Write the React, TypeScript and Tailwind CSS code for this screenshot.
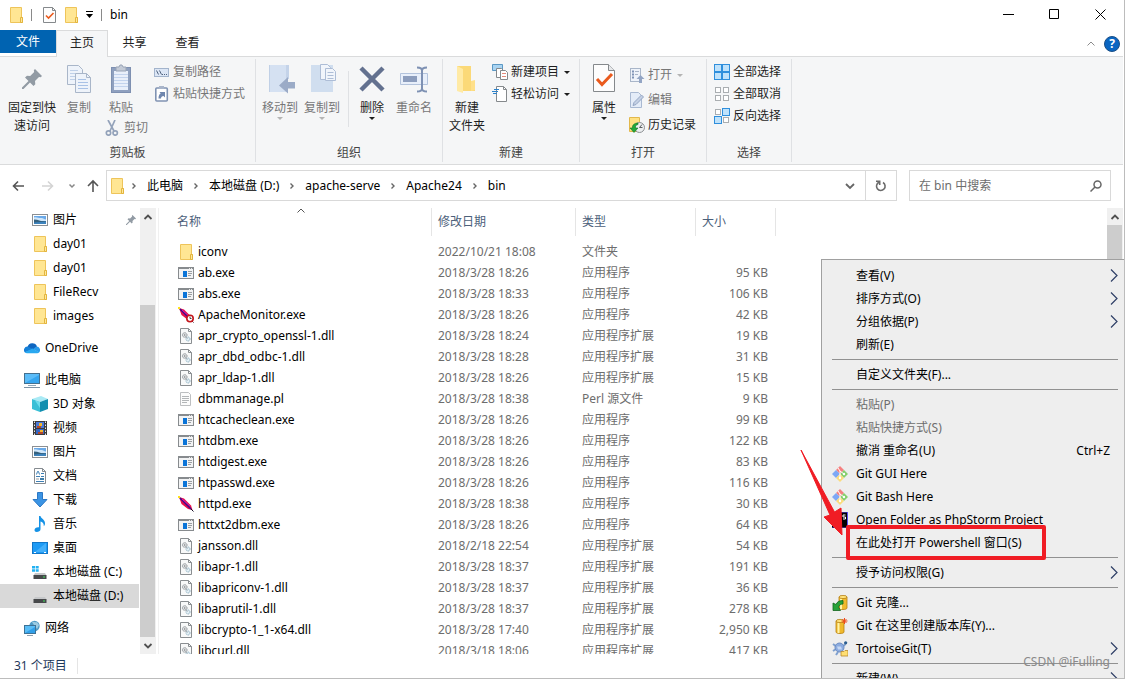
import type { ReactNode } from "react";
import clsx from "clsx";

type IconProps = { className?: string };

/* ---------- shared icons ---------- */

const FolderIcon = ({ className = "size-4" }: IconProps) => (
  <svg viewBox="0 0 16 16" className={className}>
    <path d="M2.500.5h11v10h1v5h-12z" fill="#ffe693" stroke="#eec45a" />
    <path d="M12.500 15.500v-5h2v5z" fill="#ffe89c" stroke="#e3b53e" />
  </svg>
);

const PinIcon = ({ className = "size-5" }: IconProps) => (
  <svg viewBox="0 0 20 20" className={className}>
    <path d="M13 0l7 7-1.300 1.300-1.700-.3-4 4 .3 3.200L11.500 17 8 13.500 1.500 20H0v-1.500L6.500 12 3 8.500 5 6.700l3.200.3 4-4-.4-1.700z" fill="#929ba4" />
  </svg>
);

const PictureIcon = () => (
  <svg viewBox="0 0 16 16" className="size-4">
    <rect x=".5" y="2.500" width="15" height="11" fill="#fff" stroke="#8b8f93" />
    <path d="M2 4h12v4H2z" fill="#6aa9e8" />
    <path d="M2 5.500c3-1 5 1 7 .5s3 1.500 5 1.500V12H2z" fill="#cfe6fa" />
    <path d="M2 7.500l3 .3 4 1.200h5V12H2z" fill="#35617e" />
    <path d="M2 10.500l12-1V12H2z" fill="#3d83bd" />
  </svg>
);

const OneDriveIcon = () => (
  <svg viewBox="0 0 16 16" className="size-4">
    <path d="M3.500 7A5 5 0 0113 6.500l-4 4z" fill="#0f66c0" />
    <path d="M3.500 6.500a3.500 3.500 0 00-2.500 6l8-3.500z" fill="#1680d8" />
    <path d="M12.500 6.500a3.500 3.500 0 012.500 6l-6-3.500z" fill="#2a9bea" />
    <path d="M.8 12.200L8.500 8.500l6.700 3.800a3 3 0 01-2 1H3a3 3 0 01-2.200-1.100z" fill="#29a8f0" />
  </svg>
);

const ComputerIcon = () => (
  <svg viewBox="0 0 16 16" className="size-4">
    <rect x=".5" y="1.500" width="15" height="10" fill="#5bbcf8" stroke="#44708f" />
    <path d="M1 11L15 3v8z" fill="#36a6f0" />
    <path d="M4 13.500h8" stroke="#8fa7b8" />
    <path d="M0 15.500h16" stroke="#7d93a5" />
  </svg>
);

const CubeIcon = () => (
  <svg viewBox="0 0 16 16" className="size-4">
    <path d="M0 3l9-3 7 3-8 3z" fill="#a9eaf5" />
    <path d="M0 3l8 3v10l-8-3z" fill="#39bfd6" />
    <path d="M8 6l8-3v10l-8 3z" fill="#128fb0" />
    <path d="M3 4.500L8 6v6z" fill="#6cdcec" />
  </svg>
);

const VideoIcon = () => (
  <svg viewBox="0 0 16 16" className="size-4">
    <rect x="1" y="1" width="14" height="14" fill="#3b3b3b" />
    <path d="M2.500 1.500v14M13.500 1.500v14" stroke="#e8e8e8" strokeDasharray="1.500 1.500" />
    <path d="M4 2h8v6H4z" fill="#4a78d8" />
    <path d="M4 9h8v5H4z" fill="#3466c4" />
    <path d="M7 3h3v3H7zM8 10h3v2H8z" fill="#f0b52d" />
    <path d="M5 6h4v2H5zM6 12h5v2H6z" fill="#b6472b" />
  </svg>
);

const DocumentIcon = () => (
  <svg viewBox="0 0 16 16" className="size-4">
    <path d="M2.500.5h8l3 3v12h-11z" fill="#fff" stroke="#858b90" />
    <path d="M10.500.5v3h3" fill="none" stroke="#858b90" />
    <path d="M4.500 6.500l1-3h1l1 3M9 5.500h3M4 8.500h4M9 8.500h3M4 13.500h8" stroke="#3c7fb5" fill="none" />
    <path d="M4 11h3" stroke="#9aa0a5" />
    <path d="M8 10h4v2H8z" fill="#3f7da8" />
  </svg>
);

const DownloadIcon = () => (
  <svg viewBox="0 0 16 16" className="size-4">
    <path d="M5.500.5h5v7h4.500L8 15 1 7.500h4.500z" fill="#3b94e4" stroke="#2b78c5" />
  </svg>
);

const MusicIcon = () => (
  <svg viewBox="0 0 16 16" className="size-4">
    <path d="M7 0h1.500c.3 2.500 5 3.500 4.500 8-.1 1-.6 1.800-1.200 2.300.3-2.800-1.300-4.300-3.300-4.800v7.700C8.500 15 6.500 16 4.700 16 3.200 16 2.500 15.200 2.500 14c0-1.500 2-3 4.500-2.700z" fill="#1592e6" />
  </svg>
);

const DesktopIcon = () => (
  <svg viewBox="0 0 16 16" className="size-4">
    <rect x=".5" y="2.500" width="15" height="11" fill="#1e9bf5" stroke="#1176c8" />
    <path d="M3 12L14 3v9z" fill="#43affa" />
    <path d="M2 12.500h2M12 12.500h2" stroke="#fff" />
  </svg>
);

const DriveIcon = ({ system = false }: { system?: boolean }) => (
  <svg viewBox="0 0 16 16" className="size-4">
    {system && <path d="M0 2h3v2.500H0zM3.700 2h3v2.500h-3zM0 5.200h3v2.500H0zM3.700 5.200h3v2.500h-3z" fill="#22b1f2" />}
    <path d="M3 9h10l1.500 2.500h-13z" fill="#c6c8ca" />
    <rect x="1.500" y="11" width="13" height="4" fill="#47494b" />
    <rect x="11" y="12.500" width="2" height="1" fill="#41e05b" />
  </svg>
);

const NetworkIcon = () => (
  <svg viewBox="0 0 16 16" className="size-4">
    <circle cx="10.500" cy="6" r="5.200" fill="#4d9ac6" />
    <path d="M8 2c2-1 3 1 5 0l2 3-2 4-3-4z" fill="#9ccbe2" />
    <rect x=".5" y="5.500" width="11" height="8" fill="#59bdf6" stroke="#3d7296" />
    <path d="M1 13L11 7v6z" fill="#319fe8" />
    <path d="M3 15.500h6" stroke="#8fa0ae" />
  </svg>
);

const ExeIcon = () => (
  <svg viewBox="0 0 16 16" className="size-4">
    <rect x=".5" y="2.500" width="15" height="11" fill="#f2f3f4" stroke="#878b8e" />
    <path d="M0 3h16" stroke="#878b8e" strokeWidth="2" />
    <path d="M11 3.500h1M13 3.500h1" stroke="#e8e8e8" />
    <path d="M5 6h4v6H5z" fill="#0a74d8" />
    <path d="M10 6.500h4M10 8.500h4M10 10.500h3" stroke="#9a9ea1" />
  </svg>
);

const DllIcon = () => (
  <svg viewBox="0 0 16 16" className="size-4">
    <path d="M2.500.5h8l3 3v12h-11z" fill="#f8f9f9" stroke="#8a8e91" />
    <path d="M10.500.5v3h3" fill="none" stroke="#8a8e91" />
    <circle cx="6.700" cy="7" r="2.300" fill="#dfe2e4" stroke="#8f9498" strokeDasharray="1.200 .5" />
    <circle cx="6.700" cy="7" r=".7" fill="#777" />
    <circle cx="10" cy="11" r="2" fill="#e4f0f6" stroke="#8fb0c2" strokeDasharray="1.200 .5" />
    <path d="M7.500 8l2 2.500" stroke="#9fa8ae" />
  </svg>
);

const TextFileIcon = () => (
  <svg viewBox="0 0 16 16" className="size-4">
    <path d="M2.500 1.500h8l2 2v11h-10z" fill="#fcfcfc" stroke="#bdbfc1" />
    <path d="M4 5.500h7M4 7.500h7M4 9.500h7M4 11.500h5" stroke="#b3b6b8" />
  </svg>
);

const FeatherIcon = ({ monitor = false }: { monitor?: boolean }) => (
  <svg viewBox="0 0 16 16" className="size-4">
    <path d="M1 1l5 1.500 7 7 1.500 4.500L10 13 3.500 8z" fill="#e8114a" />
    <path d="M2 2l11 11" stroke="#3d0b8f" strokeWidth="1.600" />
    <path d="M4 3l8 7" stroke="#d11bb2" />
    <path d="M0 0h2v2H0z" fill="#ffe21a" />
    <path d="M13 13l2.500 2.500" stroke="#160e26" />
    {monitor && (
      <>
        <circle cx="12" cy="11.500" r="3.200" fill="#fff" stroke="#c4161c" strokeWidth="1.600" />
        <path d="M12 9.500v2h1.500" fill="none" stroke="#444" />
      </>
    )}
  </svg>
);

const Chevron = ({ className }: IconProps) => (
  <svg viewBox="0 0 10 10" className={clsx("size-2.5 shrink-0", className)} fill="none" stroke="currentColor">
    <path d="M1.500 3.500L5 7l3.500-3.500" />
  </svg>
);

const CrumbArrow = () => (
  <svg viewBox="0 0 10 10" className="mx-1 size-2.5 shrink-0" fill="none" stroke="#666" strokeWidth="1.400">
    <path d="M3.500 2.500L6 5 3.500 7.500" />
  </svg>
);

const Caret = ({ className }: IconProps) => (
  <svg viewBox="0 0 6 3" className={clsx("h-[3px] w-1.5 shrink-0", className)} fill="currentColor">
    <path d="M0 0h6L3 3z" />
  </svg>
);

/* ---------- ribbon icons ---------- */

const PropertiesIcon = ({ className = "size-8" }: IconProps) => (
  <svg viewBox="0 0 32 32" className={className}>
    <path d="M5.500 1.500h15l6 6v21h-21z" fill="#fdfdfd" stroke="#85898c" />
    <path d="M20.500 1.500v6h6" fill="#e6e8ea" stroke="#85898c" />
    <path d="M9 16l5 5.500 10-10.500" fill="none" stroke="#ea5a1d" strokeWidth="3" />
  </svg>
);

const CopyIcon = () => (
  <svg viewBox="0 0 32 32" className="size-8">
    <g fill="#eef3fa" stroke="#a9b6c9">
      <path d="M4.500 2.500h11l4 4v15h-15z" />
      <path d="M7 7.500h8M7 10.500h10M7 13.500h10M7 16.500h10" stroke="#bfd0e8" />
      <path d="M12.500 10.500h11l4 4v15h-15z" />
      <path d="M23.500 10.500v4h4" fill="none" />
      <path d="M15 16.500h8M15 19.500h10M15 22.500h10M15 25.500h10" stroke="#a9c2e6" />
    </g>
  </svg>
);

const PasteIcon = () => (
  <svg viewBox="0 0 32 32" className="size-8">
    <rect x="6.500" y="4.500" width="19" height="25" fill="#8fa0bf" stroke="#7e90b1" />
    <path d="M9 8h14v19H9z" fill="#e9effa" />
    <path d="M9 11.500h14M9 14.500h14M9 17.500h14M9 20.500h14M9 23.500h14" stroke="#c3d3ed" />
    <path d="M11 4h3l1-2h2l1 2h3v4H11z" fill="#c3cad6" stroke="#99a4b6" />
  </svg>
);

const ScissorsIcon = () => (
  <svg viewBox="0 0 16 16" className="size-4" fill="none" stroke="#93a2ba" strokeWidth="1.700">
    <path d="M3 0l6 11M10 0L5 11" />
    <circle cx="3.500" cy="13" r="2.200" />
    <circle cx="10.200" cy="13" r="2.200" />
  </svg>
);

const CopyPathIcon = () => (
  <svg viewBox="0 0 16 16" className="size-4">
    <rect x=".5" y="4.500" width="14" height="8" fill="#dce6f5" stroke="#a3b4cc" />
    <path d="M2.500 6.500l2 4M5.500 6.500l2 4" stroke="#51647f" />
    <path d="M8 10.500h1M10 10.500h1M12 10.500h1" stroke="#51647f" />
  </svg>
);

const PasteShortcutIcon = () => (
  <svg viewBox="0 0 16 16" className="size-4">
    <rect x="1.800" y="2" width="11.500" height="13" rx="1" fill="#fff" stroke="#8093b3" strokeWidth="1.600" />
    <path d="M5 0h5v3H5z" fill="#a9b5ca" />
    <path d="M4.500 12.500c0-3 1-4.500 2.200-5L5.500 6H11v5.500L9.500 10c-1.500.3-2.500 1-2.500 2.500z" fill="#6f86ae" />
  </svg>
);

const MoveToIcon = () => (
  <svg viewBox="0 0 32 32" className="size-8">
    <path d="M5 2h19v27H5z" fill="#d5e1f2" />
    <path d="M22 2h3v14h-3z" fill="#c4d3e9" />
    <path d="M5.500 2v27" stroke="#c0d0e6" />
    <path d="M31 19h-7v-5l-9 8.500 9 8v-5h7z" fill="#9babc7" />
  </svg>
);

const CopyToIcon = () => (
  <svg viewBox="0 0 32 32" className="size-8">
    <path d="M5 2h22v27H5z" fill="#d0deef" />
    <g fill="#f1f5fb" stroke="#adbdd6">
      <path d="M14.500 1.500h7l3 3v12h-10z" />
      <path d="M19.500 5.500h7l3 3v9h-10z" />
      <path d="M21.500 9.500h6M21.500 12.500h6M21.500 15.500h6" />
    </g>
  </svg>
);

const DeleteIcon = () => (
  <svg viewBox="0 0 32 32" className="size-8" stroke="#63718f" strokeWidth="4.500">
    <path d="M5 5l22 22M27 5L5 27" />
  </svg>
);

const RenameIcon = () => (
  <svg viewBox="0 0 32 32" className="size-8" fill="none">
    <path d="M2.500 10.500h27v11h-27z" fill="#e8effa" stroke="#b3c3dc" />
    <path d="M5 13h14v6H5z" fill="#8c9dbd" />
    <path d="M19 4.500c3 0 5 .5 5 3v18c0 2.500-2 3-5 3M29 4.500c-3 0-5 .5-5 3v18c0 2.500 2 3 5 3" stroke="#7e91b3" strokeWidth="2" />
  </svg>
);

const NewFolderIcon = () => (
  <svg viewBox="0 0 32 32" className="size-8">
    <path d="M6 3h14v15l4 1v9H10l-4-1z" fill="#fbd978" />
    <path d="M6 3l6 3v24l-6-2z" fill="#ffeaa5" />
    <path d="M20 18l4-1v10l-4 1z" fill="#ffe08a" />
  </svg>
);

const NewItemIcon = () => (
  <svg viewBox="0 0 16 16" className="size-4">
    <path d="M.5.5h10v6H.5z" fill="#a9d4f2" stroke="#5b98c4" />
    <path d="M4.500 4.500h5l2 2v7h-7z" fill="#fff" stroke="#85898c" />
    <path d="M8.500 6.500h5l2 2v7h-7z" fill="#fff" stroke="#85898c" />
    <path d="M10 9.500h4M10 12.500h4" stroke="#e48a7b" />
  </svg>
);

const EasyAccessIcon = () => (
  <svg viewBox="0 0 16 16" className="size-4">
    <path d="M4.500.5h7l3 3v12h-10z" fill="#fff" stroke="#85898c" />
    <path d="M11.500.5v3h3" fill="none" stroke="#85898c" />
    <path d="M2 3.500h5M0 5.500h6M1 7.500h4" stroke="#2c82cb" />
  </svg>
);

const OpenIcon = () => (
  <svg viewBox="0 0 16 16" className="size-4">
    <rect x="1.500" y="1.500" width="10" height="13" fill="#eef3fa" stroke="#a9b6c9" />
    <path d="M3 4.500h2M3 7.500h2M3 10.500h2" stroke="#7f93b6" strokeWidth="2" />
    <path d="M6 4.500h4M6 7.500h3" stroke="#a9b6c9" />
    <path d="M11.500 8l4 4H13v4h-3v-4H7.500z" fill="#93a5c4" />
  </svg>
);

const EditIcon = () => (
  <svg viewBox="0 0 16 16" className="size-4">
    <path d="M1.500.5h8l3 3v12h-11z" fill="#e4ecf8" stroke="#a9b9d2" />
    <path d="M4 13.500l1-3L12.500 3l2 2L7 12.500z" fill="#c4d0e4" stroke="#94a6c4" />
  </svg>
);

const HistoryIcon = () => (
  <svg viewBox="0 0 16 16" className="size-4">
    <path d="M.5.5h10v14H.5z" fill="#ffe182" stroke="#e2b84c" />
    <circle cx="10.500" cy="10.500" r="5" fill="#eceef0" stroke="#8d9194" />
    <path d="M10.500 10.500l2.500-3M10.500 10.500h3" stroke="#5b5f62" />
    <path d="M9 6C5 6 3 8.500 3.500 11H1l4 4.500L9 11H6.500C6.200 9 7 8 9 7.500z" fill="#22a83a" stroke="#127427" strokeWidth=".6" />
  </svg>
);

const SelectIcon = ({ filled }: { filled: boolean[] }) => (
  <svg viewBox="0 0 16 16" className="size-4">
    {filled.map((on, i) => {
      const x = (i % 2) * 8;
      const y = i > 1 ? 8 : 0;
      return on ? (
        <rect key={i} x={x + 0.5} y={y + 0.5} width="7" height="7" fill="#bfe2fb" stroke="#2f8fdc" />
      ) : (
        <rect key={i} x={x + 1.5} y={y + 1.5} width="5" height="5" fill="#fff" stroke="#aaaeb1" />
      );
    })}
  </svg>
);

/* ---------- context menu icons ---------- */

const GitIcon = () => (
  <svg viewBox="0 0 16 16" className="size-4">
    <path d="M8 0l4 4-4 4-4-4z" fill="#f58080" />
    <path d="M4 4l4 4-4 4-4-4z" fill="#7da7f5" />
    <path d="M12 4l4 4-4 4-4-4z" fill="#85cf6c" />
    <path d="M8 8l4 4-4 4-4-4z" fill="#fbdc7c" />
    <path d="M6 2l2 3v7M8 5l4 3" stroke="#fff" fill="none" />
    <circle cx="8" cy="12" r="1.200" fill="#fff" />
    <circle cx="12" cy="8" r="1.200" fill="#fff" />
  </svg>
);

const PhpStormIcon = () => (
  <svg viewBox="0 0 16 16" className="size-4">
    <rect width="16" height="16" fill="#5a4ff0" />
    <rect width="15" height="15" y=".5" fill="#000" />
    <path d="M6 7V3h2.500v2H6M13.500 3H11v2h2.500v2H11" stroke="#fff" fill="none" />
  </svg>
);

const CloneIcon = () => (
  <svg viewBox="0 0 16 16" className="size-4">
    <path d="M7 2v11c0 2 8 2 8 0V2z" fill="#f0b92c" stroke="#b57e10" strokeWidth=".8" />
    <path d="M9 3v11" stroke="#fff3a6" strokeWidth="2" />
    <ellipse cx="11" cy="2" rx="4" ry="1.600" fill="#ffe27a" stroke="#b57e10" strokeWidth=".8" />
    <path d="M11 5.500C7 5.500 5 7 4 9.500L1 8v7.500h7.500L6.500 12c1-2 2-3 4.500-3z" fill="#27a338" stroke="#12641d" strokeWidth=".8" />
  </svg>
);

const RepoIcon = () => (
  <svg viewBox="0 0 16 16" className="size-4">
    <path d="M4 3v11c0 2 8 2 8 0V3z" fill="#f0b92c" stroke="#b57e10" strokeWidth=".8" />
    <path d="M6.500 4v11" stroke="#fff3a6" strokeWidth="2" />
    <ellipse cx="8" cy="3" rx="4" ry="1.600" fill="#ffe27a" stroke="#b57e10" strokeWidth=".8" />
    <path d="M12.500 0v6M9.500 3h6M10.500 1l4 4M14.500 1l-4 4" stroke="#ee4b1d" />
  </svg>
);

const TortoiseIcon = () => (
  <svg viewBox="0 0 16 16" className="size-4">
    <path d="M1 3l4 3M1 10l3-2M4 14l2-3M14 1l-2 4" stroke="#7fa0cf" strokeWidth="2" />
    <circle cx="7.500" cy="6.500" r="4.500" fill="#8cace0" stroke="#6d8cc0" />
    <path d="M5 5.500h4l1 3H6z" fill="#c6d8f4" />
    <circle cx="13.700" cy="1.800" r="1.600" fill="#2e5f8f" />
    <path d="M9 10.500h3l1-1h3v5.500H9z" fill="#ffdf73" stroke="#b8892c" strokeWidth=".8" />
  </svg>
);

/* ---------- ribbon ---------- */

type BigButtonProps = {
  icon: ReactNode;
  lines: string[];
  disabled?: boolean;
  caret?: boolean;
  className?: string;
};

const BigButton = ({ icon, lines, disabled, caret, className }: BigButtonProps) => (
  <button
    type="button"
    disabled={disabled}
    className={clsx("flex shrink-0 flex-col items-center pt-1", disabled ? "text-[#777]" : "text-[#1e1e1e]", className)}
  >
    <span className="flex size-8 items-center justify-center">{icon}</span>
    <span className="mt-1 leading-[18px]">
      {lines.map((line) => (
        <span key={line} className="block">{line}</span>
      ))}
    </span>
    {caret && <Caret className={disabled ? "text-[#b4b4b4]" : "text-[#1e1e1e]"} />}
  </button>
);

type SmallButtonProps = { icon: ReactNode; label: string; disabled?: boolean; caret?: boolean };

const SmallButton = ({ icon, label, disabled, caret }: SmallButtonProps) => (
  <button
    type="button"
    disabled={disabled}
    className={clsx("flex h-[22px] items-center gap-[3px]", disabled ? "text-[#777]" : "text-[#1e1e1e]")}
  >
    {icon}
    <span>{label}</span>
    {caret && <Caret className={clsx("ml-0.5", disabled && "text-[#b4b4b4]")} />}
  </button>
);

const RibbonGroup = ({ label, className, children }: { label: string; className: string; children: ReactNode }) => (
  <section aria-label={label} className={clsx("flex shrink-0 flex-col border-r border-[#dfe1e4]", className)}>
    <div className="flex flex-1 items-start">{children}</div>
    <div className="pb-px text-center leading-4 text-[#444]">{label}</div>
  </section>
);

const Ribbon = () => (
  <div className="flex h-[109px] shrink-0 border-y border-[#dadbdc] bg-[#f5f6f7] py-0.5">
    <RibbonGroup label="剪贴板" className="w-64">
      <BigButton icon={<PinIcon />} lines={["固定到快", "速访问"]} className="ml-2 w-12" />
      <BigButton icon={<CopyIcon />} lines={["复制"]} disabled className="ml-[7px] w-8" />
      <div className="ml-2.5 w-11">
        <BigButton icon={<PasteIcon />} lines={["粘贴"]} disabled className="w-8" />
        <SmallButton icon={<ScissorsIcon />} label="剪切" disabled />
      </div>
      <div className="ml-[5px] pt-0.5">
        <SmallButton icon={<CopyPathIcon />} label="复制路径" disabled />
        <SmallButton icon={<PasteShortcutIcon />} label="粘贴快捷方式" disabled />
      </div>
    </RibbonGroup>
    <RibbonGroup label="组织" className="w-[187px]">
      <BigButton icon={<MoveToIcon />} lines={["移动到"]} disabled caret className="ml-1.5" />
      <BigButton icon={<CopyToIcon />} lines={["复制到"]} disabled caret className="ml-1.5" />
      <div className="mt-3 ml-2 h-14 w-px bg-[#dfe1e4]" />
      <BigButton icon={<DeleteIcon />} lines={["删除"]} caret className="ml-[7px] w-8" />
      <BigButton icon={<RenameIcon />} lines={["重命名"]} disabled className="ml-2" />
    </RibbonGroup>
    <RibbonGroup label="新建" className="w-[137px]">
      <BigButton icon={<NewFolderIcon />} lines={["新建", "文件夹"]} className="ml-1.5" />
      <div className="ml-[7px] pt-0.5">
        <SmallButton icon={<NewItemIcon />} label="新建项目" caret />
        <SmallButton icon={<EasyAccessIcon />} label="轻松访问" caret />
      </div>
    </RibbonGroup>
    <RibbonGroup label="打开" className="w-[127px]">
      <BigButton icon={<PropertiesIcon />} lines={["属性"]} caret className="ml-2 w-8" />
      <div className="ml-[9px] flex flex-col gap-[3px] pt-[5px]">
        <SmallButton icon={<OpenIcon />} label="打开" disabled caret />
        <SmallButton icon={<EditIcon />} label="编辑" disabled />
        <SmallButton icon={<HistoryIcon />} label="历史记录" />
      </div>
    </RibbonGroup>
    <RibbonGroup label="选择" className="w-[85px]">
      <div className="ml-[7px] pt-0.5">
        <SmallButton icon={<SelectIcon filled={[true, true, true, true]} />} label="全部选择" />
        <SmallButton icon={<SelectIcon filled={[false, false, false, false]} />} label="全部取消" />
        <SmallButton icon={<SelectIcon filled={[false, true, true, false]} />} label="反向选择" />
      </div>
    </RibbonGroup>
  </div>
);

/* ---------- title bar and tabs ---------- */

const TitleBar = () => (
  <header className="flex h-[30px] shrink-0 items-center pb-px">
    <div className="flex flex-1 items-center pl-2">
      <FolderIcon />
      <span className="mx-[7px] h-3 w-px bg-[#8a8a8a]" />
      <button type="button" aria-label="属性" className="ml-0.5">
        <svg viewBox="0 0 16 16" className="size-4">
          <path d="M2.500.5h9l3 3v12h-12z" fill="#fdfdfd" stroke="#85898c" />
          <path d="M11.500.5v3h3" fill="none" stroke="#85898c" />
          <path d="M5 8.500l2.500 2.500 5-5" fill="none" stroke="#ea5a1d" strokeWidth="1.600" />
        </svg>
      </button>
      <button type="button" aria-label="新建文件夹" className="ml-1.5">
        <FolderIcon />
      </button>
      <button type="button" aria-label="自定义快速访问工具栏" className="ml-[7px] flex flex-col items-center gap-0.5">
        <span className="h-px w-[7px] bg-black" />
        <svg viewBox="0 0 7 4" className="h-1 w-[7px]"><path d="M0 0h7L3.500 4z" /></svg>
      </button>
      <span className="mx-2 h-3 w-px bg-[#8a8a8a]" />
      <h1>bin</h1>
    </div>
    <button type="button" aria-label="最小化" className="flex w-[46px] justify-center">
      <svg viewBox="0 0 11 11" className="size-[11px]" stroke="#000"><path d="M0 5.500h11" /></svg>
    </button>
    <button type="button" aria-label="最大化" className="flex w-[46px] justify-center">
      <svg viewBox="0 0 11 11" className="size-[11px]" stroke="#000" fill="none"><path d="M.5.5h9v9h-9z" /></svg>
    </button>
    <button type="button" aria-label="关闭" className="flex w-[46px] justify-center">
      <svg viewBox="0 0 11 11" className="size-[11px]" stroke="#000"><path d="M.5.5l10 10M10.500.5l-10 10" /></svg>
    </button>
  </header>
);

const Tabs = () => (
  <nav className="z-10 -mb-px flex h-[27px] shrink-0 text-[#222]">
    <button type="button" className="mb-1 w-14 bg-[#0063b1] pt-px text-white">文件</button>
    <button type="button" className="w-[52px] border border-b-0 border-[#dadbdc] bg-[#f5f6f7] pb-0.5">主页</button>
    <button type="button" className="w-[53px] pb-0.5">共享</button>
    <button type="button" className="w-[53px] pb-0.5">查看</button>
    <div className="flex flex-1 items-center justify-end gap-2 pr-[3px]">
      <button type="button" aria-label="最小化功能区">
        <Chevron className="rotate-180 text-[#8b8b8b]" />
      </button>
      <button type="button" aria-label="帮助" className="flex size-4 items-center justify-center rounded-full border border-[#1b4f86] bg-[#0a66c2] font-bold text-white">
        ?
      </button>
    </div>
  </nav>
);

/* ---------- address bar ---------- */

const crumbs = ["此电脑", "本地磁盘 (D:)", "apache-serve", "Apache24", "bin"];

const AddressBar = () => (
  <div className="flex h-[43px] shrink-0 items-start pt-[5px] pr-3">
    <div className="flex h-[31px] w-[106px] items-center text-[#555]">
      <button type="button" aria-label="后退" className="ml-3">
        <svg viewBox="0 0 14 14" className="size-3.5" fill="none" stroke="currentColor" strokeWidth="1.600">
          <path d="M12 7H1.500M6 2.500L1.500 7 6 11.500" />
        </svg>
      </button>
      <button type="button" aria-label="前进" className="ml-4 text-[#d4d4d4]">
        <svg viewBox="0 0 14 14" className="size-3.5" fill="none" stroke="currentColor" strokeWidth="1.600">
          <path d="M0 7h10.500M6 2.500l4.500 4.500L6 11.500" />
        </svg>
      </button>
      <button type="button" aria-label="最近浏览的位置" className="ml-[11px]">
        <svg viewBox="0 0 10 10" className="size-2.5" fill="none" stroke="#888" strokeWidth="1.500">
          <path d="M2.500 3.500L5 6l2.500-2.500" />
        </svg>
      </button>
      <button type="button" aria-label="上移" className="ml-[9px]">
        <svg viewBox="0 0 14 14" className="size-3.5" fill="none" stroke="currentColor" strokeWidth="1.600">
          <path d="M7 13V2M2 7l5-5 5 5" />
        </svg>
      </button>
    </div>
    <div className="flex h-[31px] flex-1 items-center border border-[#d9d9d9]">
      <span className="ml-0.5 shrink-0"><FolderIcon /></span>
      {crumbs.map((crumb) => (
        <span key={crumb} className="flex items-center">
          <CrumbArrow />
          <button type="button" className="px-1">{crumb}</button>
        </span>
      ))}
      <button type="button" aria-label="展开地址栏" className="mr-2.5 ml-auto text-[#666]">
        <svg viewBox="0 0 10 10" className="size-2.5" fill="none" stroke="currentColor" strokeWidth="1.800">
          <path d="M1 3l4 4 4-4" />
        </svg>
      </button>
      <button type="button" aria-label="刷新" className="flex h-full w-[31px] items-center justify-center border-l border-[#d9d9d9]">
        <svg viewBox="0 0 12 12" className="size-3" fill="none" stroke="#6b6b6b" strokeWidth="1.600">
          <path d="M8 2.500A4.300 4.300 0 114 2.300" />
          <path d="M1 1.300h3.700v3.700" />
        </svg>
      </button>
    </div>
    <div className="ml-3 flex h-[31px] w-[202px] items-center border border-[#d9d9d9] pr-2">
      <input aria-label="搜索" placeholder="在 bin 中搜索" className="min-w-0 flex-1 px-[9px] outline-none placeholder:text-[#6d6d6d]" />
      <svg viewBox="0 0 12 12" className="size-3" fill="none" stroke="#666" strokeWidth="1.500">
        <circle cx="7.500" cy="4.500" r="3.500" />
        <path d="M5 7L.5 11.500" />
      </svg>
    </div>
  </div>
);

/* ---------- navigation pane ---------- */

type NavItem = { label: string; icon: ReactNode; root?: boolean; pinned?: boolean; selected?: boolean };

const navGroups: NavItem[][] = [
  [
    { label: "图片", icon: <PictureIcon />, pinned: true },
    { label: "day01", icon: <FolderIcon /> },
    { label: "day01", icon: <FolderIcon /> },
    { label: "FileRecv", icon: <FolderIcon /> },
    { label: "images", icon: <FolderIcon /> },
  ],
  [{ label: "OneDrive", icon: <OneDriveIcon />, root: true }],
  [
    { label: "此电脑", icon: <ComputerIcon />, root: true },
    { label: "3D 对象", icon: <CubeIcon /> },
    { label: "视频", icon: <VideoIcon /> },
    { label: "图片", icon: <PictureIcon /> },
    { label: "文档", icon: <DocumentIcon /> },
    { label: "下载", icon: <DownloadIcon /> },
    { label: "音乐", icon: <MusicIcon /> },
    { label: "桌面", icon: <DesktopIcon /> },
    { label: "本地磁盘 (C:)", icon: <DriveIcon system /> },
    { label: "本地磁盘 (D:)", icon: <DriveIcon />, selected: true },
  ],
  [{ label: "网络", icon: <NetworkIcon />, root: true }],
];

const ScrollArrow = ({ up = false }: { up?: boolean }) => (
  <span className="flex h-[17px] shrink-0 items-center justify-center">
    <svg viewBox="0 0 10 10" className={clsx("size-2.5", up && "rotate-180")} fill="none" stroke="#505050" strokeWidth="1.800">
      <path d="M1.500 3L5 6.500 8.500 3" />
    </svg>
  </span>
);

const Sidebar = () => (
  <aside className="flex w-[159px] shrink-0 border-r border-[#f0f0f0]">
    <nav className="flex w-[139px] flex-col gap-2 overflow-hidden">
      {navGroups.map((group, i) => (
        <div key={i}>
          {group.map((item, j) => (
            <a
              key={j}
              href="#"
              className={clsx(
                "flex h-6 items-center gap-[5px] whitespace-nowrap",
                item.root ? "pl-6" : "pl-8",
                item.selected && "bg-[#d9d9d9]",
              )}
            >
              {item.icon}
              {item.label}
              {item.pinned && <span className="mr-[3px] ml-auto"><PinIcon className="size-2.5" /></span>}
            </a>
          ))}
        </div>
      ))}
    </nav>
    <div className="ml-px flex w-4 flex-col bg-[#f0f0f0]">
      <ScrollArrow up />
      <div className="mt-20 w-[15px] flex-1 bg-[#cdcdcd]" />
      <ScrollArrow />
    </div>
  </aside>
);

/* ---------- file list ---------- */

const exe = <ExeIcon />;
const dll = <DllIcon />;
const APP = "应用程序";
const EXT = "应用程序扩展";

const files: [ReactNode, string, string, string, string][] = [
  [<FolderIcon />, "iconv", "2022/10/21 18:08", "文件夹", ""],
  [exe, "ab.exe", "2018/3/28 18:26", APP, "95 KB"],
  [exe, "abs.exe", "2018/3/28 18:33", APP, "106 KB"],
  [<FeatherIcon monitor />, "ApacheMonitor.exe", "2018/3/28 18:26", APP, "42 KB"],
  [dll, "apr_crypto_openssl-1.dll", "2018/3/28 18:24", EXT, "19 KB"],
  [dll, "apr_dbd_odbc-1.dll", "2018/3/28 18:28", EXT, "31 KB"],
  [dll, "apr_ldap-1.dll", "2018/3/28 18:26", EXT, "15 KB"],
  [<TextFileIcon />, "dbmmanage.pl", "2018/3/28 18:38", "Perl 源文件", "9 KB"],
  [exe, "htcacheclean.exe", "2018/3/28 18:26", APP, "99 KB"],
  [exe, "htdbm.exe", "2018/3/28 18:26", APP, "122 KB"],
  [exe, "htdigest.exe", "2018/3/28 18:26", APP, "83 KB"],
  [exe, "htpasswd.exe", "2018/3/28 18:26", APP, "116 KB"],
  [<FeatherIcon />, "httpd.exe", "2018/3/28 18:38", APP, "30 KB"],
  [exe, "httxt2dbm.exe", "2018/3/28 18:26", APP, "64 KB"],
  [dll, "jansson.dll", "2018/2/18 22:54", EXT, "54 KB"],
  [dll, "libapr-1.dll", "2018/3/28 18:37", EXT, "191 KB"],
  [dll, "libapriconv-1.dll", "2018/3/28 18:37", EXT, "36 KB"],
  [dll, "libaprutil-1.dll", "2018/3/28 18:37", EXT, "278 KB"],
  [dll, "libcrypto-1_1-x64.dll", "2018/3/28 17:40", EXT, "2,950 KB"],
  [dll, "libcurl.dll", "2018/3/18 18:06", EXT, "417 KB"],
];

const FileList = () => (
  <main className="flex min-w-0 flex-1 items-start justify-between overflow-hidden pl-3">
    <table className="w-[605px] table-fixed border-separate border-spacing-0">
      <thead className="text-[#4c607a]">
        <tr className="h-7 text-left *:border-r *:border-[#e5e5e5] *:px-1.5 *:py-0 *:font-normal">
          <th className="relative w-[261px]">
            名称
            <Chevron className="absolute -top-0.5 left-1/2 -translate-x-1/2 rotate-180 text-[#555]" />
          </th>
          <th className="w-36">修改日期</th>
          <th className="w-[120px]">类型</th>
          <th className="w-20">大小</th>
        </tr>
      </thead>
      <tbody className="text-[#6d6d6d] before:block before:h-[5px] before:content-['']">
        {files.map(([icon, name, date, type, size]) => (
          <tr key={name} className="h-[21px] whitespace-nowrap *:py-0">
            <td className="pl-[7px] text-black">
              <span className="flex items-center gap-1">
                {icon}
                {name}
              </span>
            </td>
            <td className="pl-1.5">{date}</td>
            <td className="pl-1.5">{type}</td>
            <td className="pr-2 text-right">{size}</td>
          </tr>
        ))}
      </tbody>
    </table>
    <div className="flex w-4 flex-col self-stretch bg-[#f0f0f0]">
      <ScrollArrow up />
      <div className="mb-24 w-[15px] flex-1 bg-[#cdcdcd]" />
    </div>
  </main>
);

/* ---------- context menu ---------- */

type MenuEntry = {
  label: string;
  icon?: ReactNode;
  submenu?: boolean;
  disabled?: boolean;
  shortcut?: string;
  highlighted?: boolean;
};

const menuSections: MenuEntry[][] = [
  [
    { label: "查看(V)", submenu: true },
    { label: "排序方式(O)", submenu: true },
    { label: "分组依据(P)", submenu: true },
    { label: "刷新(E)" },
  ],
  [{ label: "自定义文件夹(F)..." }],
  [
    { label: "粘贴(P)", disabled: true },
    { label: "粘贴快捷方式(S)", disabled: true },
    { label: "撤消 重命名(U)", shortcut: "Ctrl+Z" },
    { label: "Git GUI Here", icon: <GitIcon /> },
    { label: "Git Bash Here", icon: <GitIcon /> },
    { label: "Open Folder as PhpStorm Project", icon: <PhpStormIcon /> },
    { label: "在此处打开 Powershell 窗口(S)", highlighted: true },
  ],
  [{ label: "授予访问权限(G)", submenu: true }],
  [
    { label: "Git 克隆...", icon: <CloneIcon /> },
    { label: "Git 在这里创建版本库(Y)...", icon: <RepoIcon /> },
    { label: "TortoiseGit(T)", icon: <TortoiseIcon />, submenu: true },
  ],
  [{ label: "新建(W)", submenu: true }],
];

/* red frame round the entry, with the arrow that points at it */
const Callout = () => (
  <>
    <span className="absolute -top-1.5 left-3.5 h-[35px] w-[200px] rounded-xs border-4 border-[#f01c24]" />
    <svg viewBox="0 0 44 90" className="absolute right-[274px] bottom-4 h-[90px] w-11" fill="#f01c24">
      <path d="M1 2L34.500 64 41 60 42 87 24 69 30 67z" stroke="#f01c24" strokeLinejoin="round" />
    </svg>
  </>
);

const ContextMenu = () => (
  <div role="menu" className="absolute top-[259px] -right-px w-[304px] border border-[#a0a0a0] bg-[#eee] py-1">
    {menuSections.map((section, i) => (
      <div key={i} className={clsx("mr-1.5 ml-2.5", i > 0 && "mt-[3px] border-t border-[#919191] pt-[3px]")}>
        {section.map((entry) => (
          <button
            key={entry.label}
            type="button"
            role="menuitem"
            disabled={entry.disabled}
            className={clsx("relative flex h-[23px] w-full items-center", entry.disabled && "text-[#6d6d6d]")}
          >
            <span className="mr-2 size-4">{entry.icon}</span>
            {entry.label}
            {entry.shortcut && <span className="mr-2 ml-auto">{entry.shortcut}</span>}
            {entry.submenu && (
              <svg viewBox="0 0 8 14" className="ml-auto h-3.5 w-2" fill="none" stroke="#2f3f66" strokeWidth="1.200">
                <path d="M1 .5l6 6-6 6" />
              </svg>
            )}
            {entry.highlighted && <Callout />}
          </button>
        ))}
      </div>
    ))}
  </div>
);

export default function App() {
  return (
    <div className="relative flex h-screen flex-col overflow-hidden border-r border-b border-[#bcbcbc] bg-white pr-px font-['Noto_Sans','Noto_Sans_CJK_SC',sans-serif] text-[12px] leading-4 text-black">
      <TitleBar />
      <Tabs />
      <Ribbon />
      <AddressBar />
      <div className="flex min-h-0 flex-1">
        <Sidebar />
        <FileList />
      </div>
      <footer className="flex h-6 shrink-0 items-center pl-3.5 text-[#1e395b]">
        <span className="border-r border-[#e5e5e5] pr-2.5">31 个项目</span>
      </footer>
      <ContextMenu />
      <div className="absolute right-3.5 bottom-2 text-[12px] text-[#8a8a8a]">CSDN @iFulling</div>
    </div>
  );
}
